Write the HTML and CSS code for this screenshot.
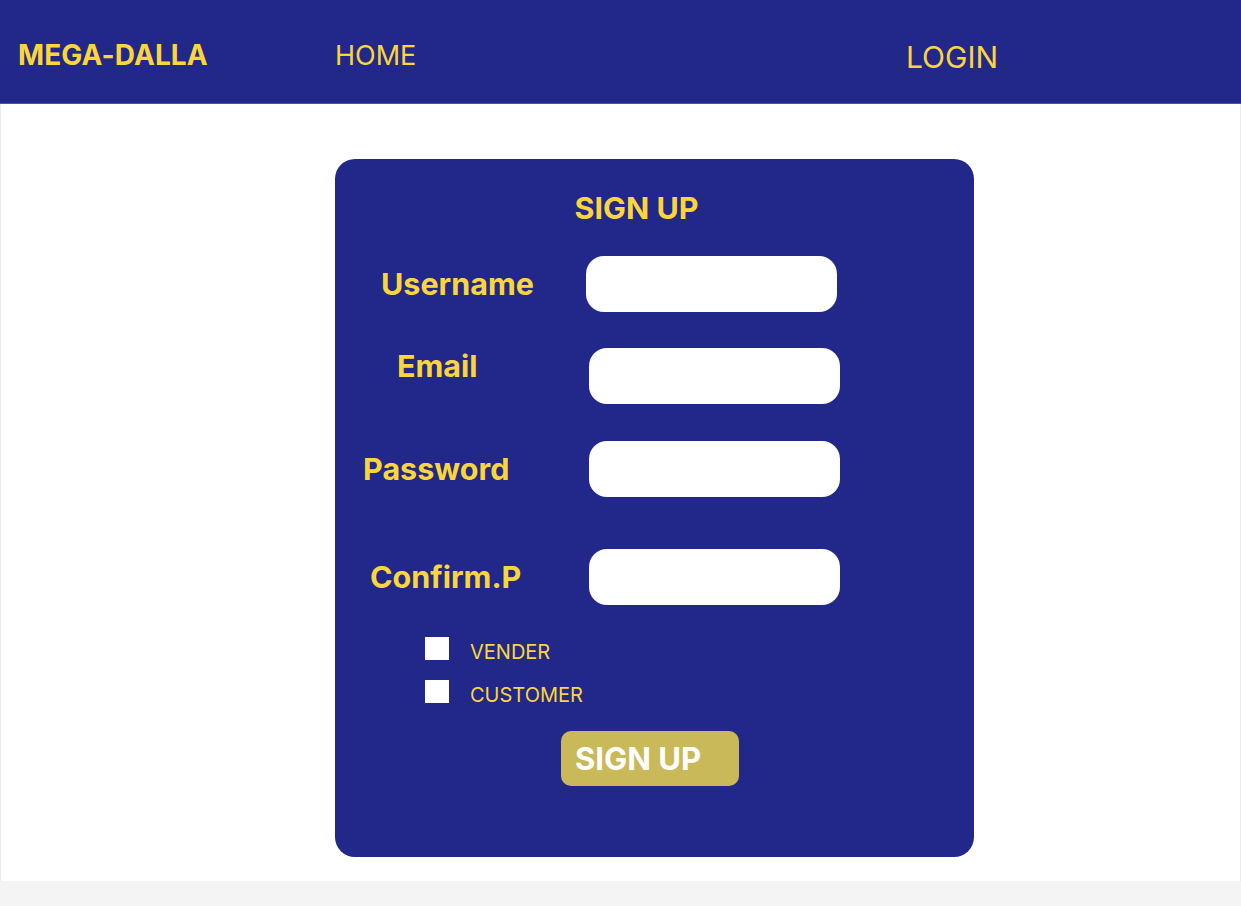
FILE: index.html
```html
<!DOCTYPE html>
<html lang="en">
<head>
<meta charset="utf-8">
<title>MEGA-DALLA — Sign up</title>
<link rel="stylesheet" href="styles.css">
</head>
<body>
<div class="page">
  <header class="topbar">
    <div class="logo">MEGA-DALLA</div>
    <a class="nav home" href="#">HOME</a>
    <a class="nav login" href="#">LOGIN</a>
  </header>
  <main class="main">
    <form class="card">
      <h1 class="title">SIGN UP</h1>
      <div class="row row-user">
        <label class="label lab-user">Username</label>
        <input class="field" type="text">
      </div>
      <div class="row row-email">
        <label class="label lab-email">Email</label>
        <input class="field" type="email">
      </div>
      <div class="row row-pass">
        <label class="label lab-pass">Password</label>
        <input class="field" type="password">
      </div>
      <div class="row row-confirm">
        <label class="label lab-confirm">Confirm.P</label>
        <input class="field" type="password">
      </div>
      <div class="checks">
        <div class="check"><span class="box"></span><span class="check-text">VENDER</span></div>
        <div class="check"><span class="box"></span><span class="check-text">CUSTOMER</span></div>
      </div>
      <div class="actions">
        <button class="btn" type="button">SIGN UP</button>
      </div>
    </form>
  </main>
</div>
</body>
</html>
```
FILE: styles.css
```css
* { box-sizing: border-box; }
html, body { margin: 0; padding: 0; }
body {
  background: #f4f4f4;
  font-family: Inter, "Liberation Sans", sans-serif;
  width: 1241px;
  height: 906px;
  overflow: hidden;
}
.page {
  width: 1241px;
  height: 881px;
  background: #ffffff;
  border-left: 1px solid #ececec;
  border-right: 1px solid #ececec;
}
.topbar {
  height: 104px;
  background: #22278a;
  border-bottom: 1px solid #4756a6;
  display: flex;
  align-items: center;
  padding-top: 7px;
  color: #fbd63a;
  margin: 0 -1px;
}
.logo {
  font-weight: 700;
  font-size: 28px;
  margin-left: 18px;
  width: 317px;
  letter-spacing: 0.1px;
}
.nav {
  color: #fbd63a;
  text-decoration: none;
  font-weight: 400;
}
.home { font-size: 27px; width: 571px; }
.login { font-size: 30px; padding-top: 3px; }

.main { padding-top: 55px; }
.card {
  margin: 0 0 0 334px;
  width: 639px;
  height: 698px;
  background: #22278a;
  border-radius: 20px;
  padding-top: 28px;
  display: flex;
  flex-direction: column;
}
.title {
  margin: 0;
  text-align: center;
  color: #fbd63a;
  font-size: 30.5px;
  font-weight: 700;
  line-height: 42px;
  padding-right: 36px;
}
.row {
  display: flex;
  align-items: center;
}
.label {
  color: #fbd63a;
  font-weight: 700;
  font-size: 30.5px;
  line-height: 36px;
}
.field {
  width: 251px;
  height: 56px;
  border: 0;
  border-radius: 18px;
  background: #ffffff;
  outline: none;
  margin: 0;
  padding: 0 16px;
}
.row-user { margin-top: 27px; }
.row-email { margin-top: 36px; }
.row-pass { margin-top: 37px; }
.row-confirm { margin-top: 52px; }

.lab-user { margin-left: 46px; width: 205px; }
.lab-email { margin-left: 62px; width: 192px; margin-bottom: 20px; }
.lab-pass { margin-left: 28px; width: 226px; }
.lab-confirm { margin-left: 35px; width: 219px; }

.checks {
  margin-top: 32px;
  margin-left: 90px;
  display: flex;
  flex-direction: column;
  gap: 20px;
}
.check {
  display: flex;
  align-items: center;
  height: 23px;
}
.box {
  width: 24px;
  height: 23px;
  background: #ffffff;
  margin-right: 21px;
}
.check-text {
  color: #fbd63a;
  font-size: 20px;
  line-height: 23px;
  padding-top: 7px;
}
.actions {
  margin-top: 28px;
  padding-left: 226px;
}
.btn {
  width: 178px;
  height: 55px;
  border: 0;
  border-radius: 10px;
  background: #c9b959;
  color: #ffffff;
  font-family: Inter, "Liberation Sans", sans-serif;
  font-weight: 700;
  font-size: 31px;
  text-align: left;
  padding: 0 0 0 14px;
}
```
